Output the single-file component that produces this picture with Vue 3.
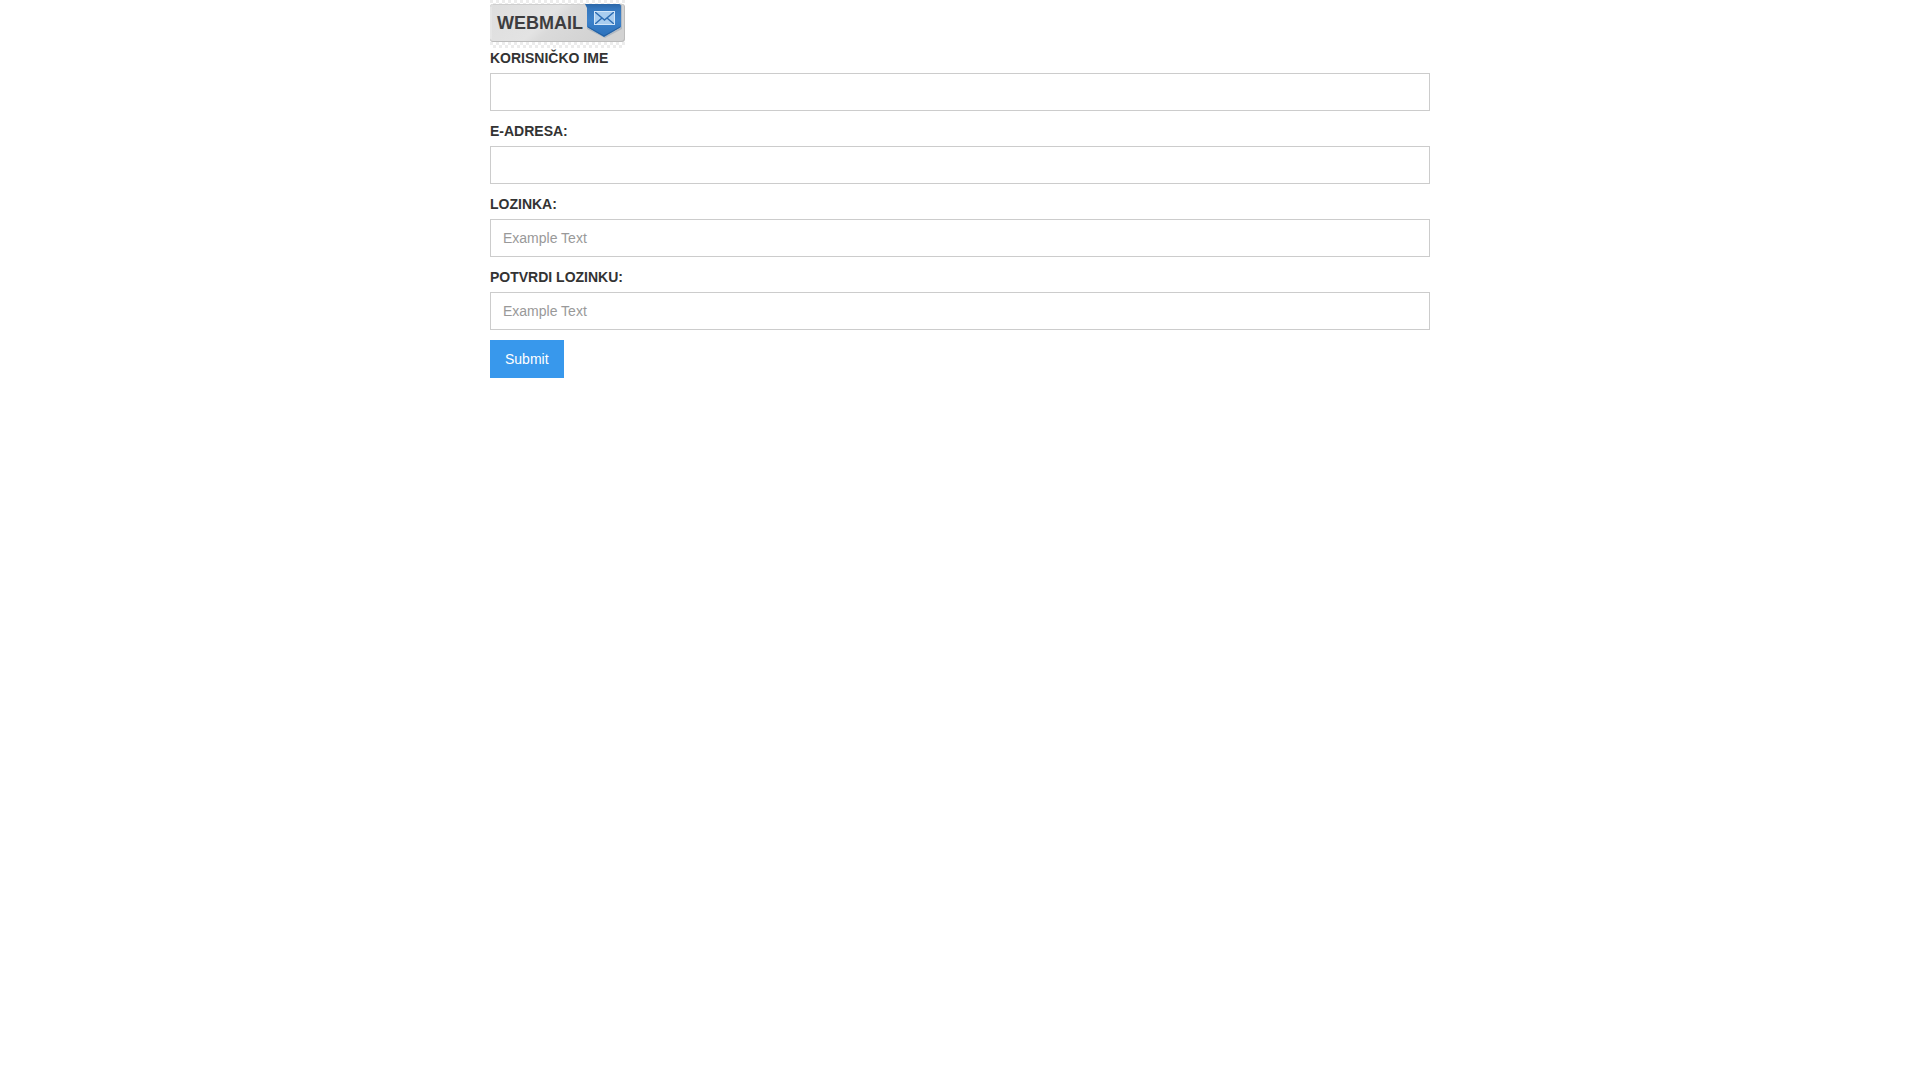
<script setup>
import { reactive } from 'vue'

const fields = [
  { id: 'username', label: 'KORISNIČKO IME', type: 'text', placeholder: '' },
  { id: 'email', label: 'E-ADRESA:', type: 'email', placeholder: '' },
  { id: 'password', label: 'LOZINKA:', type: 'password', placeholder: 'Example Text' },
  { id: 'confirm', label: 'POTVRDI LOZINKU:', type: 'password', placeholder: 'Example Text' }
]

const form = reactive({ username: '', email: '', password: '', confirm: '' })
</script>

<template>
  <main class="container">
    <svg class="logo" viewBox="0 0 135 48" role="img" aria-label="Webmail">
      <defs>
        <pattern id="checks" width="6" height="6" patternUnits="userSpaceOnUse">
          <rect width="6" height="6" fill="#ffffff" />
          <path d="M0 0h3v3H0zM3 3h3v3H3z" fill="#ececec" />
        </pattern>
        <linearGradient id="plate" x1="0" y1="0" x2="1" y2="0.3">
          <stop offset="0" stop-color="#dedede" />
          <stop offset="0.5" stop-color="#e3e3e3" />
          <stop offset="0.6" stop-color="#dadada" />
          <stop offset="1" stop-color="#d2d2d2" />
        </linearGradient>
        <linearGradient id="badge" x1="0" y1="0" x2="0" y2="1">
          <stop offset="0" stop-color="#2b67a8" />
          <stop offset="0.15" stop-color="#3577bd" />
          <stop offset="0.5" stop-color="#3d82ca" />
          <stop offset="1" stop-color="#2a70bb" />
        </linearGradient>
      </defs>
      <rect width="135" height="48" fill="url(#checks)" />
      <rect y="4" width="135" height="38" rx="3" fill="#bcbcbc" />
      <rect y="4" width="134" height="37" rx="3" fill="url(#plate)" />
      <path d="M3 4.500H132" stroke="#cfcfcf" />
      <path d="M1 39V7" stroke="#ececec" />
      <text class="logo-text" x="7" y="29">WEBMAIL</text>
      <path d="M97 5H132V29L115 38L97 29Z" fill="#b2b9c1" />
      <path d="M95 4H129Q131 4 131 7V27L114 37L97 27V8Z" fill="url(#badge)" />
      <path d="M98 27L114 36L130 27" fill="none" stroke="#2460a0" />
      <rect x="104" y="11" width="21" height="14" fill="#a9cdef" />
      <path d="M105 12L114.500 20L124 12M105 24L112 18M124 24L117 18" fill="none" stroke="#2d6db3" stroke-width="1.500" />
      <rect x="104.500" y="11.500" width="20" height="13" fill="none" stroke="#d3e6f8" />
    </svg>

    <form @submit.prevent>
      <div v-for="field in fields" :key="field.id">
        <label :for="field.id">{{ field.label }}</label>
        <input
          :id="field.id"
          v-model="form[field.id]"
          :type="field.type"
          :placeholder="field.placeholder"
        />
      </div>
      <button type="submit">Submit</button>
    </form>
  </main>
</template>

<style>
body {
  margin: 0;
  background: #fff;
}
</style>

<style scoped>
.container {
  max-width: 940px;
  margin: 0 auto;
  color: #333;
  font-family: "Liberation Sans", Arial, sans-serif;
  font-size: 14px;
  line-height: 20px;
}

.logo {
  display: block;
  width: 135px;
  height: 48px;
}

.logo-text {
  fill: #3d3d3f;
  font-size: 18px;
  font-weight: bold;
}

label {
  display: block;
  margin-bottom: 5px;
  font-weight: bold;
}

input {
  display: block;
  box-sizing: border-box;
  width: 100%;
  height: 38px;
  margin: 0 0 10px;
  padding: 8px 12px;
  border: 1px solid #ccc;
  border-radius: 0;
  background: #fff;
  color: #333;
  font: inherit;
}

input::placeholder {
  color: #999;
}

button {
  display: block;
  padding: 9px 15px;
  border: 0;
  border-radius: 0;
  background: #3898ec;
  color: #fff;
  font: inherit;
  cursor: pointer;
}
</style>
